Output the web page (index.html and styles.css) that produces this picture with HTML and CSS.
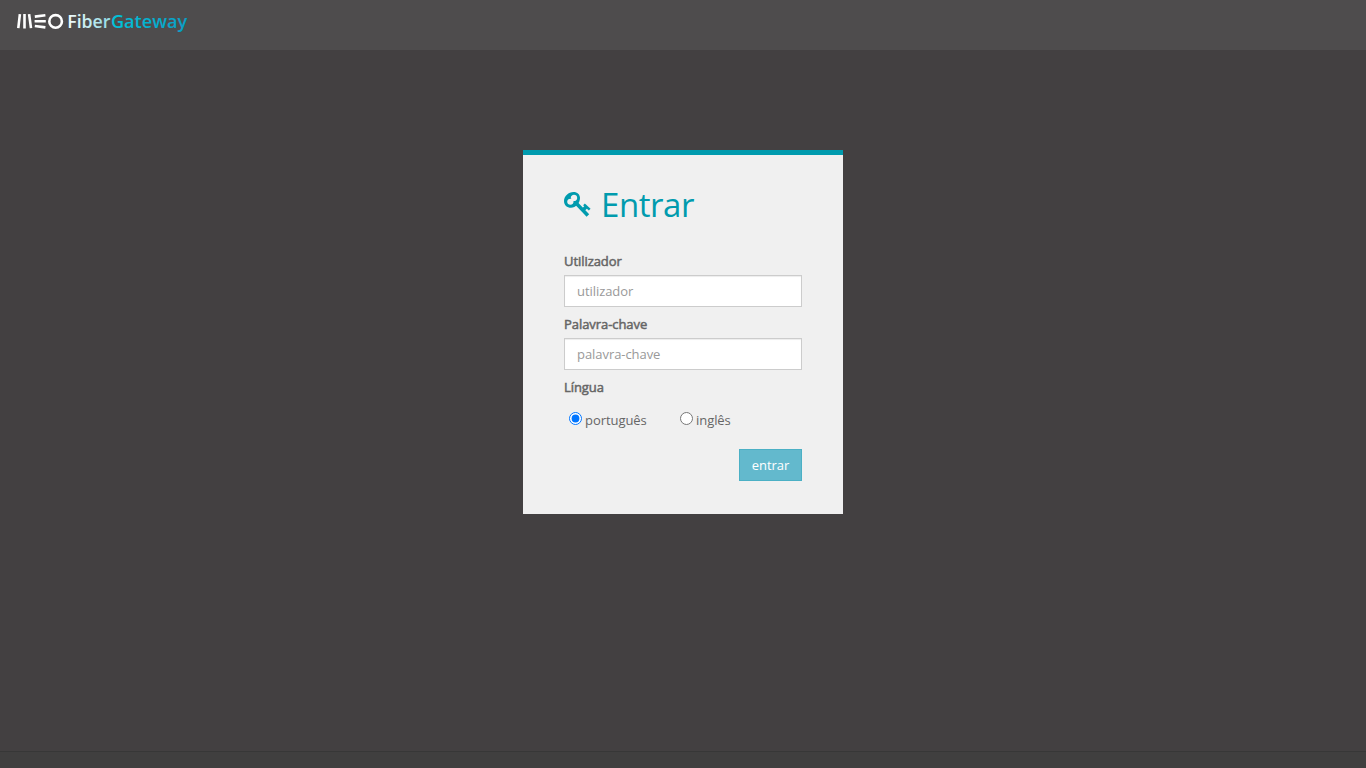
FILE: index.html
```html
<!DOCTYPE html>
<html lang="pt">
<head>
<meta charset="utf-8">
<title>MEO FiberGateway</title>
<link rel="stylesheet" href="styles.css">
</head>
<body>
<header class="topbar">
  <svg class="logo" width="190" height="36" viewBox="0 0 190 36" role="img" aria-label="MEO FiberGateway">
    <defs>
      <linearGradient id="fiber" gradientUnits="userSpaceOnUse" x1="68" y1="0" x2="112" y2="0"><stop offset="0" stop-color="#f2fbfb"/><stop offset="1" stop-color="#8fdae5"/></linearGradient>
      <linearGradient id="gateway" gradientUnits="userSpaceOnUse" x1="111" y1="0" x2="187" y2="0"><stop offset="0" stop-color="#00c3d8"/><stop offset="1" stop-color="#0a9dc5"/></linearGradient>
    </defs>
    <g fill="none" stroke="#fff" stroke-width="2.6">
      <path d="M19.9 14.2 18.3 28.2M24.5 14v14.4M29.1 14.2l1.9 14M34.8 16.6l10.6-1.4M34.6 21.3h11.2M34.8 26l10.6 1.4"/>
      <circle cx="55.6" cy="21.4" r="6.3"/>
    </g>
    <text class="wordmark" x="67.200" y="28" textLength="43.3" lengthAdjust="spacingAndGlyphs" fill="url(#fiber)">Fiber</text>
    <text class="wordmark" x="110.900" y="28" textLength="76.3" lengthAdjust="spacingAndGlyphs" fill="url(#gateway)">Gateway</text>
  </svg>
</header>
<main class="content">
  <form class="login">
    <h1 class="title">
      <svg class="key" width="28" height="28" viewBox="0 0 28 28" aria-hidden="true">
        <path d="M12 13 23.900 25.400M18.500 20.500l4-4" fill="none" stroke="#009bae" stroke-width="3.6"/>
        <path d="M20 14.300l5.700 5.400" fill="none" stroke="#009bae" stroke-width="2.500"/>
        <path fill="#009bae" fill-rule="evenodd" d="M9.500 2C13.400 2 16 4.600 16 8c0 5-4.400 9.800-9 9.800C3 17.800 0 15 0 11 0 6 4.600 2 9.500 2ZM10 4.800C8.100 4.800 6.800 6.200 6.800 7.600L7.300 9C5.200 8.400 3.200 9.900 3.200 11.800c0 1.800 1.400 3 3.200 3 2.100 0 3.400-1.600 3.100-3.700C11.600 11.300 13.200 9.800 13.200 7.900 13.200 6 11.800 4.800 10 4.800Z"/>
      </svg>
      <span>Entrar</span>
    </h1>
    <label class="label" for="user">Utilizador</label>
    <input class="field" id="user" type="text" placeholder="utilizador">
    <label class="label" for="pass">Palavra-chave</label>
    <input class="field" id="pass" type="password" placeholder="palavra-chave">
    <div class="label">Língua</div>
    <div class="languages">
      <label class="choice"><input class="radio" type="radio" name="lang" checked><span>português</span></label>
      <label class="choice"><input class="radio" type="radio" name="lang"><span>inglês</span></label>
    </div>
    <button class="submit" type="button">entrar</button>
  </form>
</main>
<footer class="footer"></footer>
</body>
</html>
```
FILE: styles.css
```css
* { box-sizing: border-box; }
body {
  margin: 0;
  height: 100vh;
  display: flex;
  flex-direction: column;
  overflow: hidden;
  background: #434041;
  color: #666;
  font: 13px/18px "Open Sans", sans-serif;
  letter-spacing: -0.06px;
}
.topbar { height: 50px; flex: none; background: #4e4c4d; }
.logo { display: block; }
.wordmark { font: 600 18px "Open Sans", sans-serif; letter-spacing: 0; }
.content { flex: 1; padding-top: 100px; }
.login {
  display: flex;
  flex-direction: column;
  width: 320px;
  height: 364px;
  margin: 0 auto;
  padding: 30px 41px 0;
  border-top: 5px solid #009bae;
  background: #f0f0f0;
}
.title {
  display: flex;
  gap: 9px;
  height: 67px;
  margin: 0;
  color: #009bae;
  font-size: 33px;
  font-weight: 400;
  letter-spacing: -0.45px;
  line-height: 39px;
}
.key { margin-top: 5px; }
.label { height: 18px; margin-bottom: 5px; -webkit-text-stroke: 0.5px #666; }
.field {
  width: 100%;
  height: 32px;
  margin: 0 0 8px;
  padding: 6px 12px;
  border: 1px solid #ccc;
  border-radius: 0;
  background: #fff;
  box-shadow: inset 0 1px 1px rgba(0, 0, 0, .075);
  color: #555;
  font: inherit;
  letter-spacing: inherit;
}
.field::placeholder { color: #999; }
.languages { display: flex; height: 48px; padding: 10px 0 0 5px; }
.choice { display: flex; width: 111px; gap: 3px; }
.radio { width: 13px; height: 13px; margin: 1px 0 0; }
.submit {
  align-self: flex-end;
  width: 63px;
  height: 32px;
  padding: 0;
  border: 1px solid #4bb0c5;
  background: #63b9cd;
  color: #fff;
  font: inherit;
  letter-spacing: inherit;
}
.footer { height: 17px; flex: none; border-top: 1px solid #373737; background: #403f3f; }
```
